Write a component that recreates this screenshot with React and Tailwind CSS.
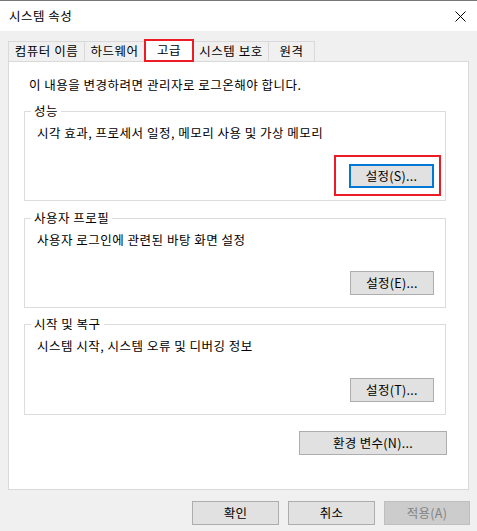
import React from 'react';

const font = { fontFamily: '"Noto Sans CJK KR", "Noto Sans", sans-serif' };

const tabs = [
  { label: '컴퓨터 이름', w: 'w-[77px]' },
  { label: '하드웨어', w: 'w-[61px]' },
  { label: '고급', w: 'w-[50px]', active: true },
  { label: '시스템 보호', w: 'w-[76px]' },
  { label: '원격', w: 'w-[47px]' },
];

const Btn = ({ children, className = '', focused, disabled }) => (
  <button
    className={`h-[24px] flex items-center justify-center text-[12.5px] tracking-[0.3px] leading-none ${
      disabled
        ? 'bg-[#cccccc] border border-[#bfbfbf] text-[#838383]'
        : focused
        ? 'bg-[#e1e1e1] border-2 border-[#0078d7] text-black'
        : 'bg-[#e1e1e1] border border-[#adadad] text-black'
    } ${className}`}
  >
    {children}
  </button>
);

const Group = ({ title, text, btn, h, focused }) => (
  <div className={`relative mr-[22px] ml-[15px] border border-[#dcdcdc] flex flex-col ${h}`}>
    <span className="absolute left-[6px] top-[-9px] bg-white px-[3px] text-[12.5px] tracking-[0.5px] leading-[16px]">{title}</span>
    <div className="pl-[12px] pt-[13px] text-[12.5px] tracking-[0.5px] leading-[16px]">{text}</div>
    {focused ? (
      <div className="mt-auto self-end mr-[4px] mb-[4px] border-2 border-[#ed1c24] pl-[13px] pr-[5px] pt-[7px] pb-[6px]">
        <Btn focused className="w-[85px] h-[23px]">{btn}</Btn>
      </div>
    ) : (
      <div className="mt-auto self-end mr-[11px] mb-[12px]">
        <Btn className="w-[84px]">{btn}</Btn>
      </div>
    )}
  </div>
);

export default function App() {
  return (
    <div className="w-[477px] h-[531px] bg-[#f0f0f0] flex flex-col text-black overflow-hidden" style={font}>
      <div className="h-px bg-[#777777]" />
      <div className="h-[30px] bg-white flex items-center justify-between pl-[9px] pr-[10px]">
        <span className="text-[12.5px] tracking-[0.5px] leading-none">시스템 속성</span>
        <svg width="11" height="11" viewBox="0 0 11 11" className="mr-[1px]">
          <path d="M0.5 0.5 L10.5 10.5 M10.5 0.5 L0.5 10.5" stroke="#000" strokeWidth="1" />
        </svg>
      </div>

      <div className="px-[8px] pt-[7px] flex flex-col">
        <div className="flex items-end h-[23px]">
          {tabs.map((t, i) =>
            t.active ? (
              <div
                key={t.label}
                className={`${t.w} -ml-px h-[23px] bg-white border-2 border-[#ed1c24] flex items-start justify-center pt-[1px] text-[12.5px] tracking-[0.5px] leading-[16px] relative z-10 -mb-px`}
              >
                {t.label}
              </div>
            ) : (
              <div
                key={t.label}
                className={`${t.w} ${i === 0 ? '' : '-ml-px'} h-[20px] border border-b-0 border-[#d9d9d9] flex items-center justify-center text-[12.5px] tracking-[0.5px] leading-none`}
              >
                {t.label}
              </div>
            )
          )}
        </div>

        <div className="w-[461px] h-[429px] bg-white border border-[#d9d9d9] flex flex-col">
          <div className="pl-[20px] pt-[15px] text-[12.5px] tracking-[0.5px] leading-[16px]">
            이 내용을 변경하려면 관리자로 로그온해야 합니다.
          </div>
          <div className="mt-[18px]">
            <Group title="성능" text="시각 효과, 프로세서 일정, 메모리 사용 및 가상 메모리" btn="설정(S)..." h="h-[90px]" focused />
          </div>
          <div className="mt-[17px]">
            <Group title="사용자 프로필" text="사용자 로그인에 관련된 바탕 화면 설정" btn="설정(E)..." h="h-[90px]" />
          </div>
          <div className="mt-[16px]">
            <Group title="시작 및 복구" text="시스템 시작, 시스템 오류 및 디버깅 정보" btn="설정(T)..." h="h-[91px]" />
          </div>
          <div className="mt-[16px] self-end mr-[21px]">
            <Btn className="w-[148px]">환경 변수(N)...</Btn>
          </div>
        </div>

        <div className="flex justify-end gap-[9px] mt-[11px] mr-[-1px]">
          <Btn className="w-[87px]">확인</Btn>
          <Btn className="w-[87px]">취소</Btn>
          <Btn disabled className="w-[86px]">적용(A)</Btn>
        </div>
      </div>
    </div>
  );
}
